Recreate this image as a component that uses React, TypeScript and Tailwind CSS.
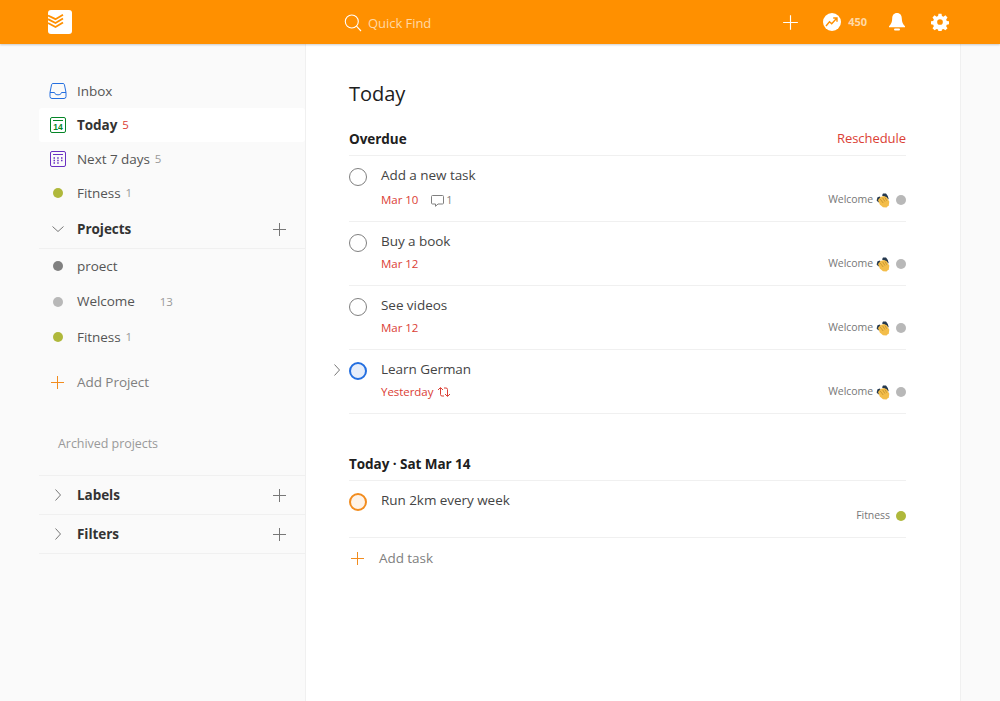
import React from "react";

const Plus = ({ c = "#777", s = 15 }: { c?: string; s?: number }) => (
  <svg width={s} height={s} viewBox="0 0 15 15" fill="none" stroke={c} strokeWidth="1"><path d="M7.5 1v13M1 7.5h13" /></svg>
);
const Chevron = ({ down }: { down?: boolean }) => (
  <svg width="14" height="14" viewBox="0 0 14 14" fill="none" stroke="#777" strokeWidth="1">
    {down ? <path d="M1.5 4.5 7 9.5l5.5-5" /> : <path d="M4.5 1.5 9.5 7l-5 5.5" />}
  </svg>
);
const Dot = ({ c, s = 10 }: { c: string; s?: number }) => (
  <span className="block rounded-full shrink-0" style={{ width: s, height: s, background: c }} />
);
const Hand = () => (
  <svg width="14" height="15" viewBox="0 0 14 15">
    <path d="M6 2.500 7 .6 10 .6 11.800 3 12.800 6.500 9 4Z" fill="#25394f" />
    <path d="M.6 7.500 1.500 4.200 4 3.400 5 5.500 2.500 9.500Z" fill="#25394f" />
    <path d="M2 7 4.500 4 8 3 10.800 4.300 13.300 8.800 12.800 12.300 10.500 14.400 7 14.200 3.800 11.500Z" fill="#f3bd4a" />
    <path d="M4.200 6 7.200 10M6.600 4.800 9 8.600M9 4.600 10.800 7.800" fill="none" stroke="#b98a2a" strokeWidth="0.7" />
  </svg>
);

function NavRow({ icon, label, count, countCls = "text-[#999]", bold, active }: { icon: React.ReactNode; label: string; count?: string; countCls?: string; bold?: boolean; active?: boolean }) {
  return (
    <div className={`h-[34px] flex items-center pl-[10px] rounded-[3px] ${active ? "bg-white" : ""}`}>
      <span className="w-[18px] h-[18px] flex items-center justify-center shrink-0">{icon}</span>
      <span className={`ml-[10px] text-[13.5px] ${bold ? "font-bold text-[#333]" : "text-[#555]"}`}>{label}</span>
      {count && <span className={`ml-[5px] text-[11.5px] ${countCls}`}>{count}</span>}
    </div>
  );
}

function SectionRow({ label, open, tall, border }: { label: string; open?: boolean; tall?: boolean; border?: boolean }) {
  return (
    <div className={`flex items-center pl-[12px] pr-[18px] border-b border-[#f0f0f0] ${border ? "border-t" : ""} ${tall ? "h-[40px]" : "h-[39px]"}`}>
      <Chevron down={open} />
      <span className="ml-[12px] text-[13.5px] font-bold text-[#333] flex-1">{label}</span>
      <Plus />
    </div>
  );
}

function Check({ border = "#808080", fill = "transparent", thick }: { border?: string; fill?: string; thick?: boolean }) {
  return (
    <span
      className={`block w-[18px] h-[18px] rounded-full shrink-0 ${thick ? "border-2" : "border"}`}
      style={{ borderColor: border, background: fill }}
    />
  );
}

function Tag({ name, color, hand = true }: { name: string; color: string; hand?: boolean }) {
  return (
    <div className="flex items-center">
      <span className="text-[10.5px] text-[#777]">{name}</span>
      {hand && <span className="ml-[3px] flex"><Hand /></span>}
      <span className="ml-[6px]"><Dot c={color} /></span>
    </div>
  );
}

function Task({ title, date, h, pt, gap, check, extra, chevron }: { title: string; date: string; h: string; pt: string; gap: string; check?: React.ReactNode; extra?: React.ReactNode; chevron?: boolean }) {
  return (
    <div className={`relative flex border-b border-[#f0f0f0] ${h} ${pt}`}>
      {chevron && (
        <span className="absolute left-[-19px] top-[13px]"><Chevron /></span>
      )}
      <span className="mt-[2px]">{check ?? <Check />}</span>
      <div className={`ml-[14px] flex-1 flex flex-col ${gap}`}>
        <div className="text-[13.5px] leading-[18px] text-[#444]">{title}</div>
        <div className="flex items-center justify-between h-[16px]">
          <div className="flex items-center">
            <span className="text-[11.5px] text-[#db4035]">{date}</span>
            {extra}
          </div>
          <Tag name="Welcome" color="#b8b8b8" />
        </div>
      </div>
    </div>
  );
}

export default function App() {
  return (
    <div className="h-[701px] flex flex-col overflow-hidden bg-white" style={{ fontFamily: '"Open Sans", "Noto Sans", sans-serif', letterSpacing: "-0.05px" }}>
      <header className="h-[44px] shrink-0 bg-[#ff9000] shadow-[0_1px_2px_rgba(0,0,0,0.2)] flex items-center relative z-10">
        <div className="w-[306px] shrink-0 pl-[48px]">
          <svg width="24" height="24" viewBox="0 0 24 24">
            <rect width="24" height="24" rx="3" fill="#fff" />
            <path d="M0 9.2 7.5 13 15 8.5M0 13 7.5 17 15 12.5M0 5.5 7.5 9.2 15 4.8" fill="none" stroke="#ff9000" strokeWidth="1.9" />
          </svg>
        </div>
        <div className="flex items-center pl-[38px] flex-1">
          <svg className="mt-[2px]" width="18" height="18" viewBox="0 0 18 18" fill="none" stroke="#fff" strokeWidth="1.1">
            <circle cx="7.8" cy="7.5" r="6.5" /><path d="M12.5 12.2 17 17" />
          </svg>
          <span className="ml-[6px] mt-[4px] text-[13px] text-[#ffd9a6]">Quick Find</span>
        </div>
        <div className="flex items-center pr-[51px]">
          <Plus c="#fff" s={17} />
          <svg className="ml-[24px]" width="18" height="18" viewBox="0 0 18 18">
            <circle cx="9" cy="9" r="9" fill="#fff" />
            <path d="M3 13 6.5 8.8l2.2 2L13.5 5.5M10.2 5h3.8v3.8" fill="none" stroke="#ff9000" strokeWidth="1.4" />
          </svg>
          <span className="ml-[7px] text-[11px] font-bold text-[#ffd9a6]">450</span>
          <svg className="ml-[22px]" width="16" height="18" viewBox="0 0 16 18" fill="#fff">
            <path d="M8 0c3.2 0 4.8 2.4 4.8 5.6 0 4 1.2 5.6 3.2 7.6v1H0v-1c2-2 3.2-3.6 3.2-7.6C3.200 2.400 4.800 0 8 0Z" /><rect x="5" y="15.500" width="6" height="2" rx="1" />
          </svg>
          <svg className="ml-[26px]" width="18" height="18" viewBox="0 0 24 24" fill="#fff">
            <path fillRule="evenodd" d="M10 1h4l.6 3.100 2 .8 2.600-1.800 2.800 2.800-1.800 2.600.8 2 3 .5v4l-3 .6-.8 2 1.800 2.600-2.800 2.800-2.600-1.800-2 .8-.6 3.100h-4l-.6-3.100-2-.8-2.600 1.800-2.800-2.800 1.800-2.600-.8-2-3-.6v-4l3-.5.8-2L2 5.900l2.800-2.800 2.600 1.800 2-.8L10 1Zm2 7.200a3.800 3.800 0 1 0 0 7.600 3.800 3.800 0 0 0 0-7.600Z" />
          </svg>
        </div>
      </header>

      <div className="flex-1 flex min-h-0">
        <aside className="w-[306px] shrink-0 bg-[#fafafa] border-r border-[#f0f0f0] pl-[39px] pt-[30px]">
          <NavRow label="Inbox" icon={
            <svg width="18" height="18" viewBox="0 0 18 18" fill="none" stroke="#246fe0" strokeWidth="1"><path d="M4 1.500h10a1.500 1.500 0 0 1 1.400 1l1.600 8v4a2 2 0 0 1-2 2H3a2 2 0 0 1-2-2v-4l1.600-8a1.500 1.500 0 0 1 1.400-1Z" /><path d="M1 10.500h4.500c.5 2 2 2.300 3.500 2.300s3-.3 3.500-2.300H17" /></svg>
          } />
          <NavRow label="Today" bold active count="5" countCls="text-[#db4035]" icon={
            <svg width="16" height="16" viewBox="0 0 16 16" fill="none"><rect x=".5" y=".5" width="15" height="15" rx="1.500" stroke="#058527" /><path d="M3 3.500h10" stroke="#058527" /><text x="8" y="12.800" textAnchor="middle" fontSize="8.500" fontWeight="700" fill="#058527" fontFamily="Liberation Sans, sans-serif">14</text></svg>
          } />
          <NavRow label="Next 7 days" count="5" icon={
            <svg width="16" height="16" viewBox="0 0 16 16" fill="none"><rect x=".5" y=".5" width="15" height="15" rx="1.500" stroke="#692fc2" /><path d="M3 3.500h10" stroke="#692fc2" /><path d="M3.500 7h1.500M7.200 7h1.500M11 7h1.500M3.500 9.500h1.500M7.200 9.500h1.500M11 9.500h1.500M3.500 12h1.500M7.200 12h1.500" stroke="#692fc2" strokeWidth="1.400" /></svg>
          } />
          <NavRow label="Fitness" count="1" icon={<Dot c="#afb83b" />} />
          <SectionRow label="Projects" open />
          <NavRow label="proect" icon={<Dot c="#808080" />} />
          <div className="h-[1px]" />
          <div className="h-[35px] flex items-center pl-[10px]">
            <span className="w-[18px] flex justify-center"><Dot c="#b8b8b8" /></span>
            <span className="ml-[10px] text-[13.5px] text-[#555]">Welcome</span>
            <span className="ml-[25px] text-[11.5px] text-[#999]">13</span>
          </div>
          <div className="h-[1px]" />
          <NavRow label="Fitness" count="1" icon={<Dot c="#afb83b" />} />
          <div className="h-[11px]" />
          <div className="h-[34px] flex items-center pl-[10px]">
            <span className="w-[18px] pl-[1px] flex"><Plus c="#f28c1e" /></span>
            <span className="ml-[10px] text-[13.5px] text-[#808080]">Add Project</span>
          </div>
          <div className="h-[27px]" />
          <div className="h-[34px] flex items-center pl-[19px] pt-[2px] text-[12.5px] text-[#999]">Archived projects</div>
          <div className="h-[15px]" />
          <SectionRow label="Labels" border tall />
          <SectionRow label="Filters" />
        </aside>

        <main className="w-[654px] shrink-0 pl-[43px] pr-[54px] pt-[35px]">
          <h1 className="h-[30px] flex items-center text-[20px] text-[#202020]">Today</h1>
          <div className="mt-[16px] h-[31px] pb-[2px] flex items-center justify-between border-b border-[#f0f0f0]">
            <span className="text-[13.5px] font-bold text-[#202020]">Overdue</span>
            <span className="text-[13px] text-[#db4035]">Reschedule</span>
          </div>
          <Task title="Add a new task" date="Mar 10" h="h-[66px]" pt="pt-[10px]" gap="gap-[8px]" extra={
            <span className="ml-[13px] flex items-center text-[11px] text-[#808080]">
              <svg width="13" height="13" viewBox="0 0 13 13" fill="none" stroke="#808080"><path d="M1.500 1.500h10a1 1 0 0 1 1 1v6.500a1 1 0 0 1-1 1H7l-2.500 2.300V10H1.500a1 1 0 0 1-1-1V2.500a1 1 0 0 1 1-1Z" /></svg>
              <span className="ml-[2px]">1</span>
            </span>
          } />
          <Task title="Buy a book" date="Mar 12" h="h-[64px]" pt="pt-[10px]" gap="gap-[6px]" />
          <Task title="See videos" date="Mar 12" h="h-[64px]" pt="pt-[10px]" gap="gap-[6px]" />
          <Task title="Learn German" date="Yesterday" h="h-[64px]" pt="pt-[10px]" gap="gap-[6px]" chevron check={<Check thick border="#246fe0" fill="#e6eefb" />} extra={
            <svg className="ml-[4px]" width="14" height="14" viewBox="0 0 14 14" fill="none" stroke="#db4035"><path d="M1 5 3.500 2.500 6 5M3.500 3v6.500a1.500 1.500 0 0 0 1.500 1.500h2M13 9l-2.500 2.500L8 9M10.500 11V4.500A1.500 1.500 0 0 0 9 3H7" /></svg>
          } />

          <div className="mt-[36px] h-[31px] pb-[2px] flex items-center border-b border-[#f0f0f0]">
            <span className="text-[13.5px] font-bold text-[#202020]">Today · Sat Mar 14</span>
          </div>
          <div className="h-[57px] flex border-b border-[#f0f0f0] pt-[10px]">
            <span className="mt-[2px]"><Check thick border="#f28c1e" fill="#fef3e8" /></span>
            <div className="ml-[14px] flex-1">
              <div className="text-[13.5px] leading-[18px] text-[#444]">Run 2km every week</div>
              <div className="flex justify-end -mt-[1px]"><Tag name="Fitness" color="#afb83b" hand={false} /></div>
            </div>
          </div>
          <div className="h-[41px] flex items-center">
            <span className="w-[18px] pl-[1px] flex"><Plus c="#f28c1e" /></span>
            <span className="ml-[12px] text-[13.5px] text-[#808080]">Add task</span>
          </div>
        </main>

        <div className="flex-1 bg-[#fafafa] border-l border-[#f0f0f0]" />
      </div>
    </div>
  );
}
